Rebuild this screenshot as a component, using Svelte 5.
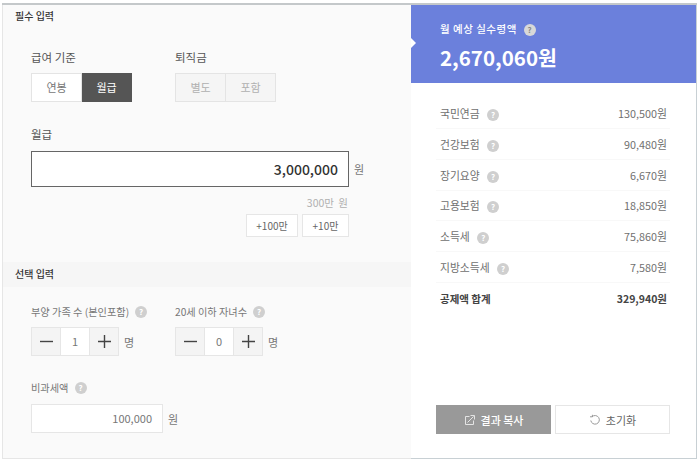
<script>
  const deductions = [
    { name: '국민연금', amount: '130,500원' },
    { name: '건강보험', amount: '90,480원' },
    { name: '장기요양', amount: '6,670원' },
    { name: '고용보험', amount: '18,850원' },
    { name: '소득세', amount: '75,860원' },
    { name: '지방소득세', amount: '7,580원' }
  ];
</script>

<div class="calc">
  <section class="inputs">
    <h2 class="head first">필수 입력</h2>
    <div class="required">
      <div class="row">
        <div class="col">
          <p class="label">급여 기준</p>
          <div class="seg">
            <span class="opt">연봉</span>
            <span class="opt on">월급</span>
          </div>
        </div>
        <div class="col">
          <p class="label">퇴직금</p>
          <div class="seg off">
            <span class="opt">별도</span>
            <span class="opt">포함</span>
          </div>
        </div>
      </div>
      <p class="label salary">월급</p>
      <div class="with-unit">
        <div class="big-input">3,000,000</div>
        <span class="unit">원</span>
      </div>
      <div class="hint">300만 원</div>
      <div class="quick">
        <span class="qbtn wide">+100만</span>
        <span class="qbtn">+10만</span>
      </div>
    </div>

    <h2 class="head">선택 입력</h2>
    <div class="optional">
      <div class="row tight">
        <div class="col">
          <p class="small-label">부양 가족 수 (본인포함) <i class="help">?</i></p>
          <div class="with-unit">
            <div class="stepper">
              <span class="step"><svg width="13" height="13" viewBox="0 0 13 13"><path d="M0 6.5h13" stroke="#444" stroke-width="1.4" /></svg></span>
              <span class="val">1</span>
              <span class="step"><svg width="13" height="13" viewBox="0 0 13 13"><path d="M0 6.5h13M6.5 0v13" stroke="#444" stroke-width="1.4" /></svg></span>
            </div>
            <span class="unit">명</span>
          </div>
        </div>
        <div class="col">
          <p class="small-label">20세 이하 자녀수 <i class="help">?</i></p>
          <div class="with-unit">
            <div class="stepper">
              <span class="step"><svg width="13" height="13" viewBox="0 0 13 13"><path d="M0 6.5h13" stroke="#444" stroke-width="1.4" /></svg></span>
              <span class="val">0</span>
              <span class="step"><svg width="13" height="13" viewBox="0 0 13 13"><path d="M0 6.5h13M6.5 0v13" stroke="#444" stroke-width="1.4" /></svg></span>
            </div>
            <span class="unit">명</span>
          </div>
        </div>
      </div>
      <p class="small-label nontax">비과세액 <i class="help">?</i></p>
      <div class="with-unit">
        <div class="small-input">100,000</div>
        <span class="unit">원</span>
      </div>
    </div>
  </section>

  <section class="result">
    <div class="summary">
      <p class="sum-label">월 예상 실수령액 <i class="help light">?</i></p>
      <p class="sum-value">2,670,060원</p>
    </div>
    <div class="body">
      <ul class="list">
        {#each deductions as item}
          <li>
            <span class="name">{item.name} <i class="help">?</i></span>
            <span>{item.amount}</span>
          </li>
        {/each}
        <li class="total">
          <span>공제액 합계</span>
          <span>329,940원</span>
        </li>
      </ul>
      <div class="actions">
        <span class="act copy">
          <svg width="12" height="12" viewBox="0 0 12 12" fill="none" stroke="#e4e4e4"><path d="M5.5 2.5h-4v8h8v-4" /><path d="M3.5 8.5L9.5 2.5M6.5 1.5h4v4" /></svg>
          결과 복사
        </span>
        <span class="act reset">
          <svg width="12" height="12" viewBox="0 0 12 12" fill="none" stroke="#999"><path d="M3 2.8a4.3 4.3 0 1 1-1.2 3.7" /><path d="M1 2.8h2.4V.8" /></svg>
          초기화
        </span>
      </div>
    </div>
  </section>
</div>

<style>
  :global(body) {
    background: #fff;
  }

  .calc {
    display: flex;
    width: 695px;
    height: 456px;
    margin: 3px 0 0 2px;
    border-top: 2px solid #c4c8ca;
    box-sizing: border-box;
    font-family: 'Noto Sans CJK KR', 'Noto Sans', sans-serif;
    font-size: 11px;
    color: #555;
  }

  p,
  h2,
  ul {
    margin: 0;
    padding: 0;
  }

  .inputs {
    width: 409px;
    background: #fafafa;
    border-left: 1px solid #e6e6e6;
    border-bottom: 1px solid #e6e6e6;
    box-sizing: border-box;
  }

  .head {
    height: 25px;
    padding-left: 12px;
    font-size: 10px;
    font-weight: 500;
    line-height: 24px;
    color: #333;
    background: #f6f6f6;
  }

  .head.first {
    height: 23px;
    line-height: 22px;
    background: #fafafa;
  }

  .required {
    height: 234px;
    box-sizing: border-box;
    padding: 20px 20px 0 28px;
  }

  .row {
    display: flex;
  }

  .col {
    width: 144px;
  }

  .label {
    font-size: 11.5px;
    line-height: 18px;
    color: #555;
  }

  .seg {
    display: flex;
    width: 101px;
    height: 29px;
    margin-top: 7px;
  }

  .opt {
    flex: 1;
    line-height: 27px;
    text-align: center;
    background: #fff;
    border: 1px solid #e4e4e4;
    color: #777;
  }

  .opt + .opt {
    border-left: 0;
  }

  .opt.on {
    background: #555;
    border-color: #555;
    color: #fff;
  }

  .seg.off .opt {
    background: #f5f5f5;
    color: #b0b0b0;
  }

  .salary {
    margin-top: 23px;
  }

  .with-unit {
    display: flex;
    align-items: center;
    gap: 5px;
  }

  .big-input {
    width: 318px;
    height: 36px;
    margin-top: 8px;
    padding-right: 10px;
    box-sizing: border-box;
    border: 1px solid #666;
    background: #fff;
    text-align: right;
    font-size: 14px;
    font-weight: 500;
    line-height: 34px;
    color: #333;
  }

  .with-unit .unit {
    color: #777;
    font-size: 11px;
  }

  .required .unit {
    margin-top: 8px;
  }

  .hint {
    width: 317px;
    margin-top: 9px;
    text-align: right;
    font-size: 10.5px;
    word-spacing: 2px;
    line-height: 14px;
    color: #b0b0b0;
  }

  .quick {
    display: flex;
    justify-content: flex-end;
    gap: 4px;
    width: 318px;
    margin-top: 4px;
  }

  .qbtn {
    width: 47px;
    height: 23px;
    box-sizing: border-box;
    border: 1px solid #e6e6e6;
    background: #fff;
    text-align: center;
    font-size: 10px;
    line-height: 21px;
    color: #666;
  }

  .qbtn.wide {
    width: 52px;
  }

  .optional {
    padding: 17px 28px 0;
  }

  .small-label {
    display: flex;
    align-items: center;
    gap: 6px;
    font-size: 10.2px;
    line-height: 16px;
    color: #777;
  }

  .stepper {
    display: flex;
    width: 88px;
    height: 29px;
    margin-top: 7px;
    border: 1px solid #e6e6e6;
    box-sizing: border-box;
  }

  .step {
    display: flex;
    align-items: center;
    justify-content: center;
    width: 28px;
    background: #f4f4f4;
  }

  .val {
    flex: 1;
    border: solid #e6e6e6;
    border-width: 0 1px;
    background: #fff;
    text-align: center;
    line-height: 26px;
    color: #777;
  }

  .nontax {
    margin-top: 24px;
  }

  .small-input {
    width: 132px;
    height: 29px;
    margin-top: 8px;
    padding-right: 10px;
    box-sizing: border-box;
    border: 1px solid #e6e6e6;
    background: #fff;
    text-align: right;
    line-height: 27px;
    color: #777;
  }

  .optional .with-unit .unit {
    margin-top: 8px;
  }

  .help {
    display: inline-block;
    width: 12px;
    height: 12px;
    border-radius: 50%;
    background: #cfcfcf;
    color: #fff;
    font-size: 8px;
    font-style: normal;
    font-weight: 700;
    line-height: 12px;
    text-align: center;
    vertical-align: middle;
    margin-left: 0;
  }

  .result {
    position: relative;
    flex: 1;
    display: flex;
    flex-direction: column;
    border-right: 1px solid #c8d0d4;
    border-bottom: 1px solid #c8d0d4;
    background: #fff;
  }

  .summary {
    position: relative;
    height: 78px;
    padding: 16px 29px 0;
    box-sizing: border-box;
    background: #6b80dc;
    color: #fff;
  }

  .summary::before {
    content: '';
    position: absolute;
    left: 0;
    top: 33px;
    width: 5px;
    height: 10px;
    background: #fff;
    clip-path: polygon(0 0, 100% 50%, 0 100%);
  }

  .sum-label {
    font-size: 10.5px;
    font-weight: 500;
    letter-spacing: 0.5px;
    line-height: 16px;
  }

  .sum-label .help {
    margin-left: 4px;
  }

  .sum-value {
    margin-top: 6px;
    font-size: 20.5px;
    font-weight: 700;
    line-height: 28px;
  }

  .help.light {
    background: #d8d8d8;
    color: #888;
  }

  .body {
    flex: 1;
    display: flex;
    flex-direction: column;
    justify-content: space-between;
    padding: 15px 26px 24px 25px;
  }

  .list {
    list-style: none;
  }

  .list li {
    display: flex;
    justify-content: space-between;
    align-items: center;
    height: 30.85px;
    box-sizing: border-box;
    padding: 0 3px 0 4px;
    border-bottom: 1px solid #f8f8f8;
    font-size: 10.8px;
    color: #707070;
  }

  .name .help {
    margin-left: 5px;
  }

  .list .total {
    border-bottom: 0;
    font-size: 10.5px;
    font-weight: 700;
    color: #444;
  }

  .actions {
    display: flex;
    gap: 4px;
  }

  .act {
    display: flex;
    align-items: center;
    justify-content: center;
    gap: 5px;
    width: 115px;
    height: 29px;
    box-sizing: border-box;
    font-size: 11px;
  }

  .copy {
    background: #999;
    color: #fff;
    font-weight: 500;
  }

  .reset {
    border: 1px solid #e6e6e6;
    color: #666;
  }
</style>
